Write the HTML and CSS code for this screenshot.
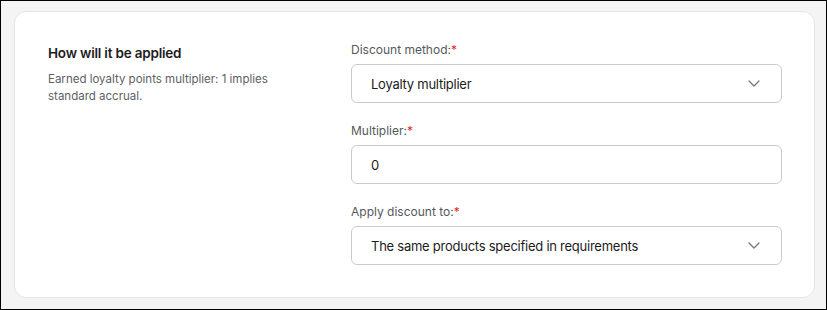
FILE: index.html
```html
<!DOCTYPE html>
<html lang="en">
<head>
<meta charset="utf-8">
<link rel="stylesheet" href="styles.css">
</head>
<body>
<div class="frame">
  <section class="card">
    <div class="intro">
      <h2 class="title">How will it be applied</h2>
      <p class="desc">Earned loyalty points multiplier: 1 implies standard accrual.</p>
    </div>
    <div class="fields">
      <div class="field">
        <label class="label">Discount method:<span class="req">*</span></label>
        <div class="control select">
          <span class="value">Loyalty multiplier</span>
          <svg class="chev" width="12" height="7" viewBox="0 0 12 7"><path d="M1 1l5 5 5-5" fill="none" stroke="#75797c" stroke-width="1.3" stroke-linecap="round" stroke-linejoin="round"/></svg>
        </div>
      </div>
      <div class="field">
        <label class="label">Multiplier:<span class="req">*</span></label>
        <div class="control">
          <span class="value">0</span>
        </div>
      </div>
      <div class="field">
        <label class="label">Apply discount to:<span class="req">*</span></label>
        <div class="control select">
          <span class="value">The same products specified in requirements</span>
          <svg class="chev" width="12" height="7" viewBox="0 0 12 7"><path d="M1 1l5 5 5-5" fill="none" stroke="#75797c" stroke-width="1.3" stroke-linecap="round" stroke-linejoin="round"/></svg>
        </div>
      </div>
    </div>
  </section>
</div>
</body>
</html>
```

FILE: styles.css
```css
* { box-sizing: border-box; }
html, body { margin: 0; padding: 0; }
body {
  width: 827px;
  height: 310px;
  font-family: Inter, "Noto Sans", sans-serif;
  color: #1c1c1c;
}
.frame {
  width: 827px;
  height: 310px;
  border: 1px solid #000;
  background: #f3f4f3;
  padding: 10px 11px 11px 13px;
}
.card {
  height: 100%;
  background: #fff;
  border: 1px solid #e4e6e4;
  border-radius: 12px;
  padding: 32px 32px 0 33px;
  display: grid;
  grid-template-columns: 271px 1fr;
  gap: 32px;
  align-items: start;
}
.title {
  margin: 0;
  font-size: 13.5px;
  font-weight: 600;
  line-height: 18px;
  letter-spacing: -0.2px;
}
.desc {
  margin: 9px 0 0;
  font-size: 11.5px;
  line-height: 17px;
  color: #5d6164;
  width: 240px;
}
.fields {
  display: flex;
  flex-direction: column;
  gap: 20px;
  margin-top: -2px;
}
.field {
  display: flex;
  flex-direction: column;
  gap: 6px;
}
.label {
  font-size: 12px;
  line-height: 16px;
  color: #55595c;
}
.req { color: #e5252a; }
.control {
  height: 39px;
  border: 1px solid #c9cccf;
  border-radius: 6px;
  display: flex;
  align-items: center;
  padding: 0 21px 0 19px;
  font-size: 13px;
  letter-spacing: -0.25px;
  color: #1c1c1c;
}
.select { justify-content: space-between; }
```
